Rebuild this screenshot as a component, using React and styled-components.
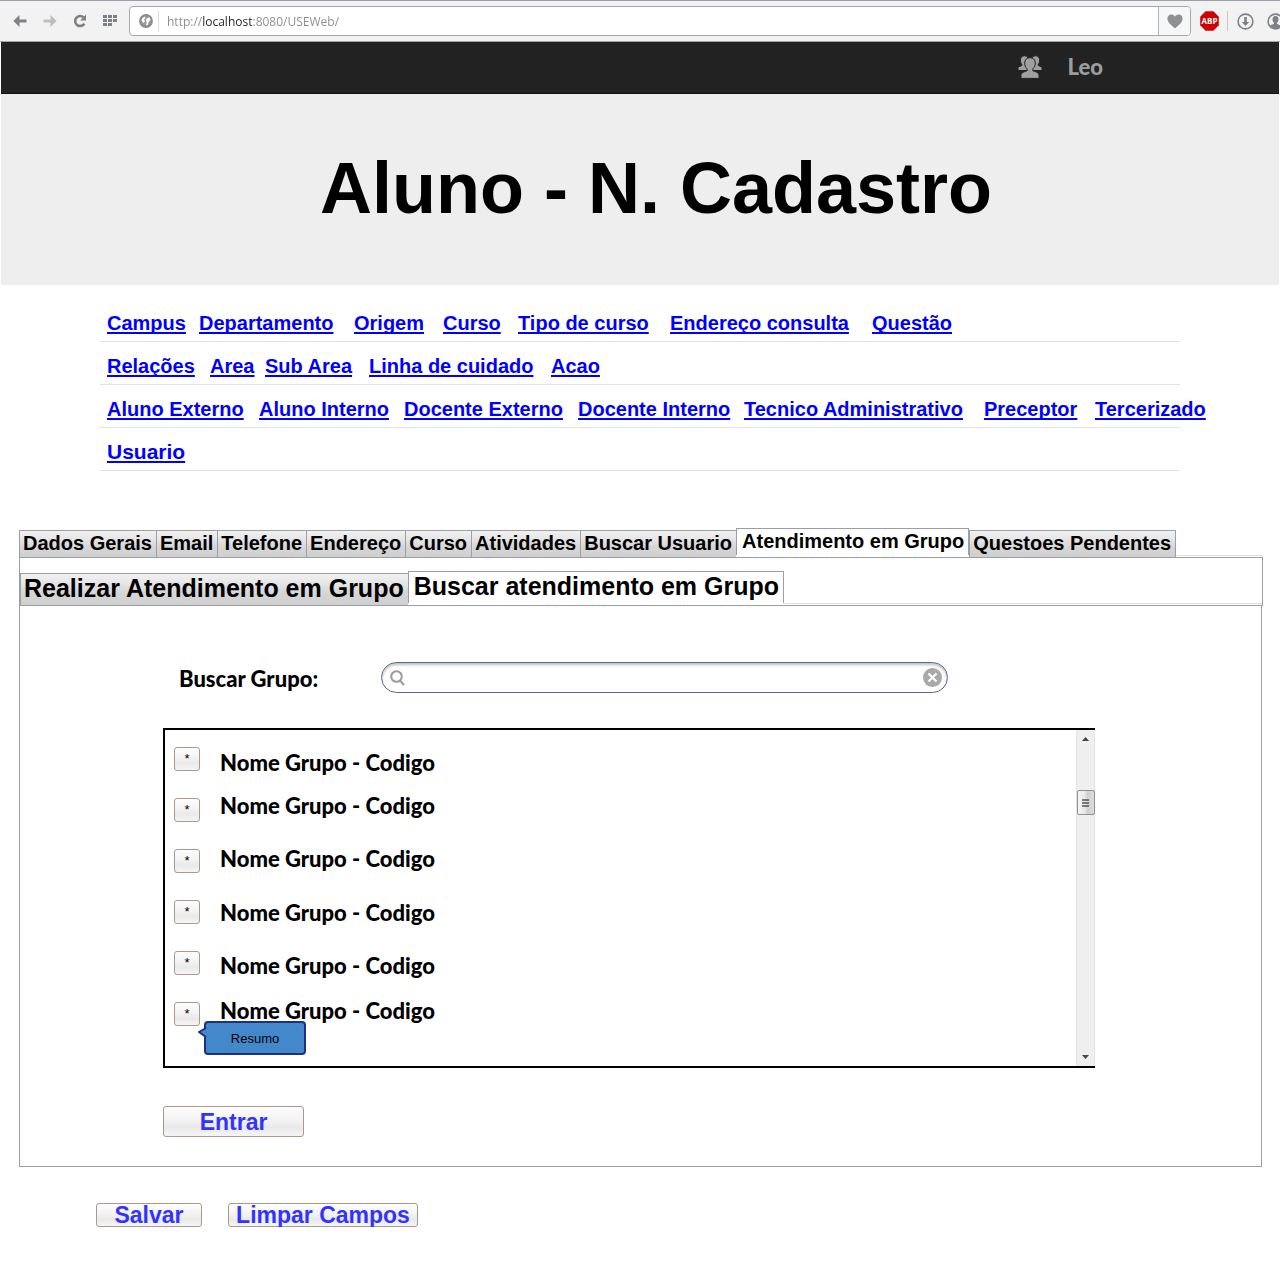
import React from "react";
import styled, { createGlobalStyle } from "styled-components";

const GlobalStyle = createGlobalStyle`
  *, *::before, *::after { box-sizing: border-box; }
  html, body { margin: 0; }
  body {
    background: #fff;
    color: #000;
    font-family: "Liberation Sans", Arial, sans-serif;
    overflow-x: hidden;
  }
  button, input { font-family: inherit; margin: 0; }
`;

const display = `"Futura", "Lato", "Liberation Sans", sans-serif`;

/* ---------- browser chrome ---------- */

const Toolbar = styled.div`
  display: flex;
  align-items: center;
  height: 42px;
  padding-left: 5px;
  background: #f2f2f2;
  border-top: 1px solid #9aa0ac;
  border-bottom: 1px solid #a6a6a6;
`;

const ToolButton = styled.button`
  display: flex;
  flex: none;
  align-items: center;
  justify-content: center;
  width: ${(p) => p.$width || 30}px;
  height: 28px;
  padding: 0;
  border: 0;
  background: none;
  color: ${(p) => p.$color || "#7d8084"};
`;

const AddressBar = styled.form`
  display: flex;
  flex: 1;
  align-items: center;
  height: 30px;
  margin: 0 0 0 4px;
  background: #fff;
  border: 1px solid #a8a8a8;
  border-radius: 4px;
  overflow: hidden;
`;

const SiteBadge = styled.span`
  display: flex;
  flex: none;
  align-items: center;
  justify-content: center;
  width: 29px;
  height: 20px;
  padding-left: 3px;
  border-right: 1px solid #dcdcdc;
  margin-right: 8px;
`;

const AddressInput = styled.input`
  flex: 1;
  min-width: 0;
  height: 24px;
  padding: 0;
  border: 0;
  outline: 0;
  font-family: "Open Sans", "Noto Sans", sans-serif;
  font-size: 12px;
  color: transparent;
  background: linear-gradient(90deg, #8c8c8c 35px, #222 35px, #222 85px, #8c8c8c 85px);
  background-clip: text;
  -webkit-background-clip: text;
`;

const Bookmark = styled.div`
  display: flex;
  border-left: 1px solid #b4b4b4;
  background: #f6f7f9;
`;

const Extensions = styled.div`
  display: flex;
  flex: none;
  align-items: center;
  gap: 8px;
  width: 89px;
  padding-left: 9px;
  overflow: hidden;
`;

const Divider = styled.span`
  flex: none;
  width: 1px;
  height: 20px;
  background: #c8c8c8;
`;

/* ---------- page header ---------- */

const UserBar = styled.header`
  display: flex;
  align-items: center;
  justify-content: flex-end;
  gap: 24px;
  height: 52px;
  margin: 0 1px;
  padding: 0 176px 2px 0;
  background: #222;
  border-bottom: 1px solid #111;
`;

const UserName = styled.span`
  font: 900 22px/24px ${display};
  color: #9d9d9d;
`;

const Banner = styled.div`
  display: flex;
  justify-content: center;
  margin: 0 1px;
  padding: 53px 0 56px 32px;
  background: #eee;
`;

const Title = styled.h1`
  margin: 0;
  font-size: 72px;
  line-height: 82px;
  white-space: nowrap;
`;

/* ---------- link navigation ---------- */

const LinkNav = styled.nav`
  margin: 14px 100px 0;
`;

const LinkRow = styled.div`
  display: grid;
  grid-template-columns: ${(p) => p.$columns};
  align-items: end;
  height: 43px;
  padding: 0 0 6px 7px;
  border-bottom: 1px solid #e2e2e2;
`;

const NavLink = styled.a`
  justify-self: start;
  color: #0000ff;
  font-size: ${(p) => (p.$large ? 21 : 20)}px;
  font-weight: bold;
  line-height: 24px;
  white-space: nowrap;
  text-decoration: underline;
  text-decoration-thickness: 2px;
  text-underline-offset: 2px;
  text-decoration-skip-ink: none;
`;

/* ---------- tabs ---------- */

const Workspace = styled.main`
  margin: 57px 17px 0 19px;
`;

const TabList = styled.div`
  display: flex;
  align-items: flex-end;
  border-bottom: 1px solid #9a9ea6;
`;

const Tab = styled.button`
  flex: none;
  align-self: ${(p) => (p.$active ? "flex-start" : "flex-end")};
  height: ${(p) => (p.$large ? 32 : 27)}px;
  margin-bottom: ${(p) => (p.$active ? 2 : 0)}px;
  padding: ${(p) => (p.$active ? "0 4px 0 5px" : "0 4px 0 3px")};
  padding-bottom: ${(p) => (p.$large ? 4 : 2)}px;
  border: 1px solid #9a9ea6;
  border-bottom-width: 0;
  border-right-width: ${(p) => (p.$active || p.$last ? 1 : 0)}px;
  background: ${(p) =>
    p.$active
      ? "#fff"
      : "linear-gradient(#f1f1f1 0%, #e4e4e4 35%, #d6d6d6 60%, #cfcfcf 100%)"};
  color: #000;
  font-size: ${(p) => (p.$large ? 25 : 20)}px;
  font-weight: bold;
  line-height: 24px;
  white-space: nowrap;
`;

const TabRest = styled.span`
  flex: 1;
  align-self: stretch;
  margin-bottom: 1px;
  border-bottom: 1px solid #e0e0e4;
`;

const SubTabs = styled.div`
  padding-top: 13px;
  border: 1px solid #9a9ea6;
  border-width: 0 1px;
`;

const Panel = styled.section`
  padding: 56px 166px 29px 143px;
  margin-right: 1px;
  border: 1px solid #9a9ea6;
  border-top: 0;
`;

/* ---------- search ---------- */

const SearchRow = styled.form`
  display: flex;
  align-items: center;
  padding: 0 147px 0 16px;
`;

const SearchLabel = styled.label`
  flex: none;
  width: 202px;
  padding-top: 3px;
  font: 900 22px/24px ${display};
`;

const SearchField = styled.div`
  display: flex;
  flex: 1;
  align-items: center;
  height: 31px;
  padding: 0 5px 0 8px;
  border: 1px solid #566b8c;
  border-radius: 16px;
  box-shadow: inset 0 2px 3px #bdbdbd;
`;

const SearchInput = styled.input`
  flex: 1;
  min-width: 0;
  height: 24px;
  padding: 0 6px;
  border: 0;
  outline: 0;
  background: transparent;
  font-size: 16px;
`;

/* ---------- group list ---------- */

const GroupBox = styled.div`
  position: relative;
  display: flex;
  height: 340px;
  margin: 35px 0 38px;
  padding-left: 9px;
  border: 2px solid #000;
  border-right: 0;
`;

const MarkColumn = styled.div`
  display: flex;
  flex-direction: column;
  gap: 27px;
  padding-top: 17px;
`;

const NameColumn = styled.div`
  display: grid;
  flex: 1;
  align-content: start;
  grid-template-rows: 43px 53px 54px 53px 45px 24px;
  padding: 21px 0 0 20px;
`;

const GroupName = styled.label`
  justify-self: start;
  font: 900 22px/24px ${display};
  white-space: nowrap;
`;

const Button = styled.button`
  display: flex;
  align-items: center;
  justify-content: center;
  width: ${(p) => p.$width}px;
  height: ${(p) => p.$height || 24}px;
  padding: 0;
  border: 1px solid #a89a8c;
  border-radius: 3px;
  background: linear-gradient(#fdfdfd 0%, #f3f3f3 45%, #e9e9e9 70%, #f5f5f5 100%);
  color: ${(p) => (p.$mark ? "#000" : "#3333ff")};
  font-size: ${(p) => (p.$mark ? 13 : 23)}px;
  font-weight: ${(p) => (p.$mark ? "normal" : "bold")};
  line-height: 24px;
  white-space: nowrap;
`;

const Callout = styled.div`
  position: absolute;
  top: 291px;
  left: 39px;
  width: 102px;
  height: 34px;
  border: 2px solid #1c3180;
  border-radius: 4px;
  background: #4488cc;
  font-size: 13px;
  line-height: 31px;
  text-align: center;
`;

const CalloutTip = styled.svg`
  position: absolute;
  top: 4px;
  left: -8px;
`;

const ScrollTrack = styled.div`
  display: flex;
  flex-direction: column;
  align-items: center;
  width: 19px;
  background: #efefef;
  border: 1px solid #e4e4e4;
  border-width: 0 1px;
`;

const ScrollButton = styled.button`
  display: flex;
  align-items: center;
  justify-content: center;
  width: 17px;
  height: 18px;
  padding: 0;
  border: 0;
  background: transparent;
`;

const ScrollThumb = styled.div`
  display: flex;
  align-items: center;
  justify-content: center;
  width: 18px;
  height: 25px;
  margin: 42px 0 auto;
  border: 1px solid #909090;
  border-radius: 2px;
  background: linear-gradient(90deg, #f6f6f6 0%, #e6e6e8 45%, #cfcfd3 60%, #dcdcdc 100%);
`;

const Actions = styled.div`
  display: flex;
  gap: 26px;
  margin: 36px 0 0 77px;
`;

/* ---------- drawings ---------- */

const BackArrow = ({ flip }) => (
  <svg width="14" height="12" viewBox="0 0 14 12">
    <path
      d={flip ? "M7.5 0v4.500H0.500v3H7.500V12L13.600 6z" : "M6.500 0v4.500h7v3h-7V12L0.400 6z"}
      fill="currentColor"
    />
  </svg>
);

const Reload = () => (
  <svg width="14" height="14" viewBox="0 0 14 14">
    <path d="M11.4 9.6A5 5 0 1 1 10.6 3.4" fill="none" stroke="currentColor" strokeWidth="2.6" />
    <path d="M13 0.6v6H7.2z" fill="currentColor" />
  </svg>
);

const SpeedDial = () => (
  <svg width="14" height="12" viewBox="0 0 14 12" fill="currentColor">
    {[0, 4, 8].flatMap((y) =>
      [0, 5, 10].map((x) => (x === 10 && y === 8 ? null : <rect key={`${x}-${y}`} x={x} y={y} width="4" height="3" />))
    )}
  </svg>
);

const Globe = () => (
  <svg width="14" height="14" viewBox="0 0 14 14">
    <circle cx="7" cy="7" r="6" fill="#9a9a9a" stroke="#8b8b8b" strokeWidth="1.8" />
    <path d="M2.600 5 5.400 2.500l1 1.400-1.400 1.600 1 1.500-1.300 2L3 7.500z" fill="#fff" />
    <path d="M7.800 4.200l2.600-.9 1.200 2.500-2 2.200-.8 3-1.700.6.600-3.400-.7-1.700z" fill="#fff" />
  </svg>
);

const Heart = () => (
  <svg width="16" height="15" viewBox="0 0 16 15">
    <path d="M8 14.4C5.4 12 .4 8.6.4 4.7.4 2.200 2.200.6 4.300.6 5.900.6 7.200 1.400 8 2.700 8.800 1.400 10.100.6 11.700.6c2.100 0 3.900 1.600 3.900 4.100C15.600 8.600 10.600 12 8 14.400z" fill="#909090" />
  </svg>
);

const AdBlock = () => (
  <svg width="19" height="20" viewBox="0 0 19 20">
    <path d="M5.600.3h7.800L18.800 5.800v8.400L13.400 19.700H5.600L.2 14.200V5.800z" fill="#d00000" />
    <text x="9.5" y="13" textAnchor="middle" fill="#fff" fontSize="8" fontWeight="bold" fontFamily="Open Sans, sans-serif">
      ABP
    </text>
  </svg>
);

const Download = () => (
  <svg width="17" height="17" viewBox="0 0 17 17">
    <circle cx="8.500" cy="8.500" r="7.400" fill="none" stroke="currentColor" strokeWidth="1.600" />
    <path d="M7.200 4h2.600v5h2.400l-3.700 4-3.700-4h2.400z" fill="currentColor" />
  </svg>
);

const Person = () => (
  <svg width="17" height="17" viewBox="0 0 17 17">
    <circle cx="8.500" cy="8.500" r="7.400" fill="none" stroke="currentColor" strokeWidth="1.600" />
    <path d="M8.500 3c2 0 3 1.500 3 3.400 0 1.500-.6 2.600-1.500 3.300v1l4 1.900C12.600 14.500 10.700 15.500 8.500 15.500S4.400 14.500 3 12.600l4-1.900v-1C6.100 9 5.500 7.900 5.500 6.400 5.500 4.500 6.500 3 8.500 3z" fill="currentColor" />
  </svg>
);

const Users = () => (
  <svg width="26" height="24" viewBox="0 0 26 24" fill="#a0a0a0" stroke="#222">
    <path d="M7.500.8c2.600 0 4 1.800 4 4.200 0 2-.8 3.500-1.800 4.500v1.300l3.300 1.600v3.100H1v-2c0-1.500 1-2 3.800-3V9.300C3.800 8.200 3.400 6.700 3.400 5 3.400 2.600 4.900.8 7.500.8z" />
    <path d="M18.500.8c-2.600 0-4 1.800-4 4.200 0 2 .8 3.500 1.800 4.500v1.300L13 12.400v3.100h12v-2c0-1.500-1-2-3.800-3V9.300c1-1.100 1.400-2.600 1.400-4.300 0-2.400-1.500-4.200-4.100-4.200z" />
    <path d="M13 2.700c3.400 0 5.300 2.200 5.300 5.400 0 2.500-1 4.400-2.400 5.700v2c3.900 1.400 6.100 2.100 6.100 4.700v2.900H4v-2.900c0-2.600 2.200-3.300 6.100-4.700v-2C8.700 12.500 7.700 10.600 7.700 8.100c0-3.200 1.900-5.400 5.300-5.400z" />
  </svg>
);

const Magnifier = () => (
  <svg width="15" height="16" viewBox="0 0 15 16" fill="none" stroke="#9a9a9a" strokeWidth="2">
    <circle cx="6.500" cy="6.500" r="5.300" />
    <path d="M10 10.500l4 4.500" />
  </svg>
);

const Clear = () => (
  <svg width="19" height="19" viewBox="0 0 19 19">
    <circle cx="9.500" cy="9.500" r="9.500" fill="#a9a9a9" />
    <path d="M5.500 5.500l8 8M13.500 5.500l-8 8" stroke="#fff" strokeWidth="2.200" />
  </svg>
);

const Caret = ({ down }) => (
  <svg width="7" height="4" viewBox="0 0 7 4">
    <path d={down ? "M0 0h7L3.500 4z" : "M0 4h7L3.500 0z"} fill="#444" />
  </svg>
);

const Grip = () => (
  <svg width="7" height="8" viewBox="0 0 7 8">
    <path d="M0 1h7M0 4h7M0 7h7" stroke="#555" strokeWidth="1.500" />
  </svg>
);

/* ---------- data ---------- */

const linkRows = [
  {
    columns: "92px 155px 89px 75px 152px 202px auto",
    links: ["Campus", "Departamento", "Origem", "Curso", "Tipo de curso", "Endereço consulta", "Questão"],
  },
  {
    columns: "103px 55px 104px 182px auto",
    links: ["Relações", "Area", "Sub Area", "Linha de cuidado", "Acao"],
  },
  {
    columns: "152px 145px 174px 166px 240px 111px auto",
    links: [
      "Aluno Externo",
      "Aluno Interno",
      "Docente Externo",
      "Docente Interno",
      "Tecnico Administrativo",
      "Preceptor",
      "Tercerizado",
    ],
  },
  { columns: "auto", links: ["Usuario"], large: true },
];

const tabs = [
  "Dados Gerais",
  "Email",
  "Telefone",
  "Endereço",
  "Curso",
  "Atividades",
  "Buscar Usuario",
  "Atendimento em Grupo",
  "Questoes Pendentes",
];

const subTabs = ["Realizar Atendimento em Grupo", "Buscar atendimento em Grupo"];

const groups = Array.from({ length: 6 }, (_, i) => ({ id: `grupo-${i + 1}`, name: "Nome Grupo - Codigo" }));

const Tabs = ({ items, active, large }) => (
  <TabList role="tablist">
    {items.map((item, i) => (
      <Tab
        key={item}
        type="button"
        role="tab"
        aria-selected={item === active}
        $active={item === active}
        $last={i === items.length - 1}
        $large={large}
      >
        {item}
      </Tab>
    ))}
    <TabRest />
  </TabList>
);

export default function App() {
  return (
    <>
      <GlobalStyle />
      <Toolbar>
        <ToolButton type="button" aria-label="Voltar"><BackArrow /></ToolButton>
        <ToolButton type="button" aria-label="Avançar" $color="#bdbdbd"><BackArrow flip /></ToolButton>
        <ToolButton type="button" aria-label="Recarregar"><Reload /></ToolButton>
        <ToolButton type="button" aria-label="Acesso rápido"><SpeedDial /></ToolButton>
        <AddressBar>
          <SiteBadge><Globe /></SiteBadge>
          <AddressInput aria-label="Endereço" defaultValue="http://localhost:8080/USEWeb/" />
          <Bookmark>
            <ToolButton type="button" aria-label="Favorito" $width={31}><Heart /></ToolButton>
          </Bookmark>
        </AddressBar>
        <Extensions>
          <ToolButton type="button" aria-label="Bloqueador" $width={19}><AdBlock /></ToolButton>
          <Divider />
          <ToolButton type="button" aria-label="Downloads" $width={19}><Download /></ToolButton>
          <ToolButton type="button" aria-label="Perfil" $width={25}><Person /></ToolButton>
        </Extensions>
      </Toolbar>

      <UserBar>
        <Users />
        <UserName>Leo</UserName>
      </UserBar>
      <Banner>
        <Title>Aluno - N. Cadastro</Title>
      </Banner>

      <LinkNav>
        {linkRows.map((row) => (
          <LinkRow key={row.links[0]} $columns={row.columns}>
            {row.links.map((link) => (
              <NavLink key={link} href="#" $large={row.large}>{link}</NavLink>
            ))}
          </LinkRow>
        ))}
      </LinkNav>

      <Workspace>
        <Tabs items={tabs} active="Atendimento em Grupo" />
        <SubTabs>
          <Tabs items={subTabs} active="Buscar atendimento em Grupo" large />
        </SubTabs>
        <Panel>
          <SearchRow>
            <SearchLabel htmlFor="busca">Buscar Grupo:</SearchLabel>
            <SearchField>
              <Magnifier />
              <SearchInput id="busca" type="text" />
              <ToolButton type="reset" aria-label="Limpar busca" $width={19}><Clear /></ToolButton>
            </SearchField>
          </SearchRow>

          <GroupBox>
            <MarkColumn>
              {groups.map((g) => (
                <Button key={g.id} id={g.id} type="button" $mark $width={26}>*</Button>
              ))}
            </MarkColumn>
            <NameColumn>
              {groups.map((g) => (
                <GroupName key={g.id} htmlFor={g.id}>{g.name}</GroupName>
              ))}
            </NameColumn>
            <ScrollTrack>
              <ScrollButton type="button" aria-label="Rolar para cima"><Caret /></ScrollButton>
              <ScrollThumb><Grip /></ScrollThumb>
              <ScrollButton type="button" aria-label="Rolar para baixo"><Caret down /></ScrollButton>
            </ScrollTrack>
            <Callout role="tooltip">
              <CalloutTip width="9" height="12" viewBox="0 0 9 12">
                <path d="M9 0.500L1 5l8 5.500z" fill="#4488cc" />
                <path d="M8 1L1 5l7 5" fill="none" stroke="#1c3180" strokeWidth="2" />
              </CalloutTip>
              Resumo
            </Callout>
          </GroupBox>

          <Button type="button" $width={141} $height={31}>Entrar</Button>
        </Panel>
        <Actions>
          <Button type="button" $width={106}>Salvar</Button>
          <Button type="button" $width={190}>Limpar Campos</Button>
        </Actions>
      </Workspace>
    </>
  );
}
